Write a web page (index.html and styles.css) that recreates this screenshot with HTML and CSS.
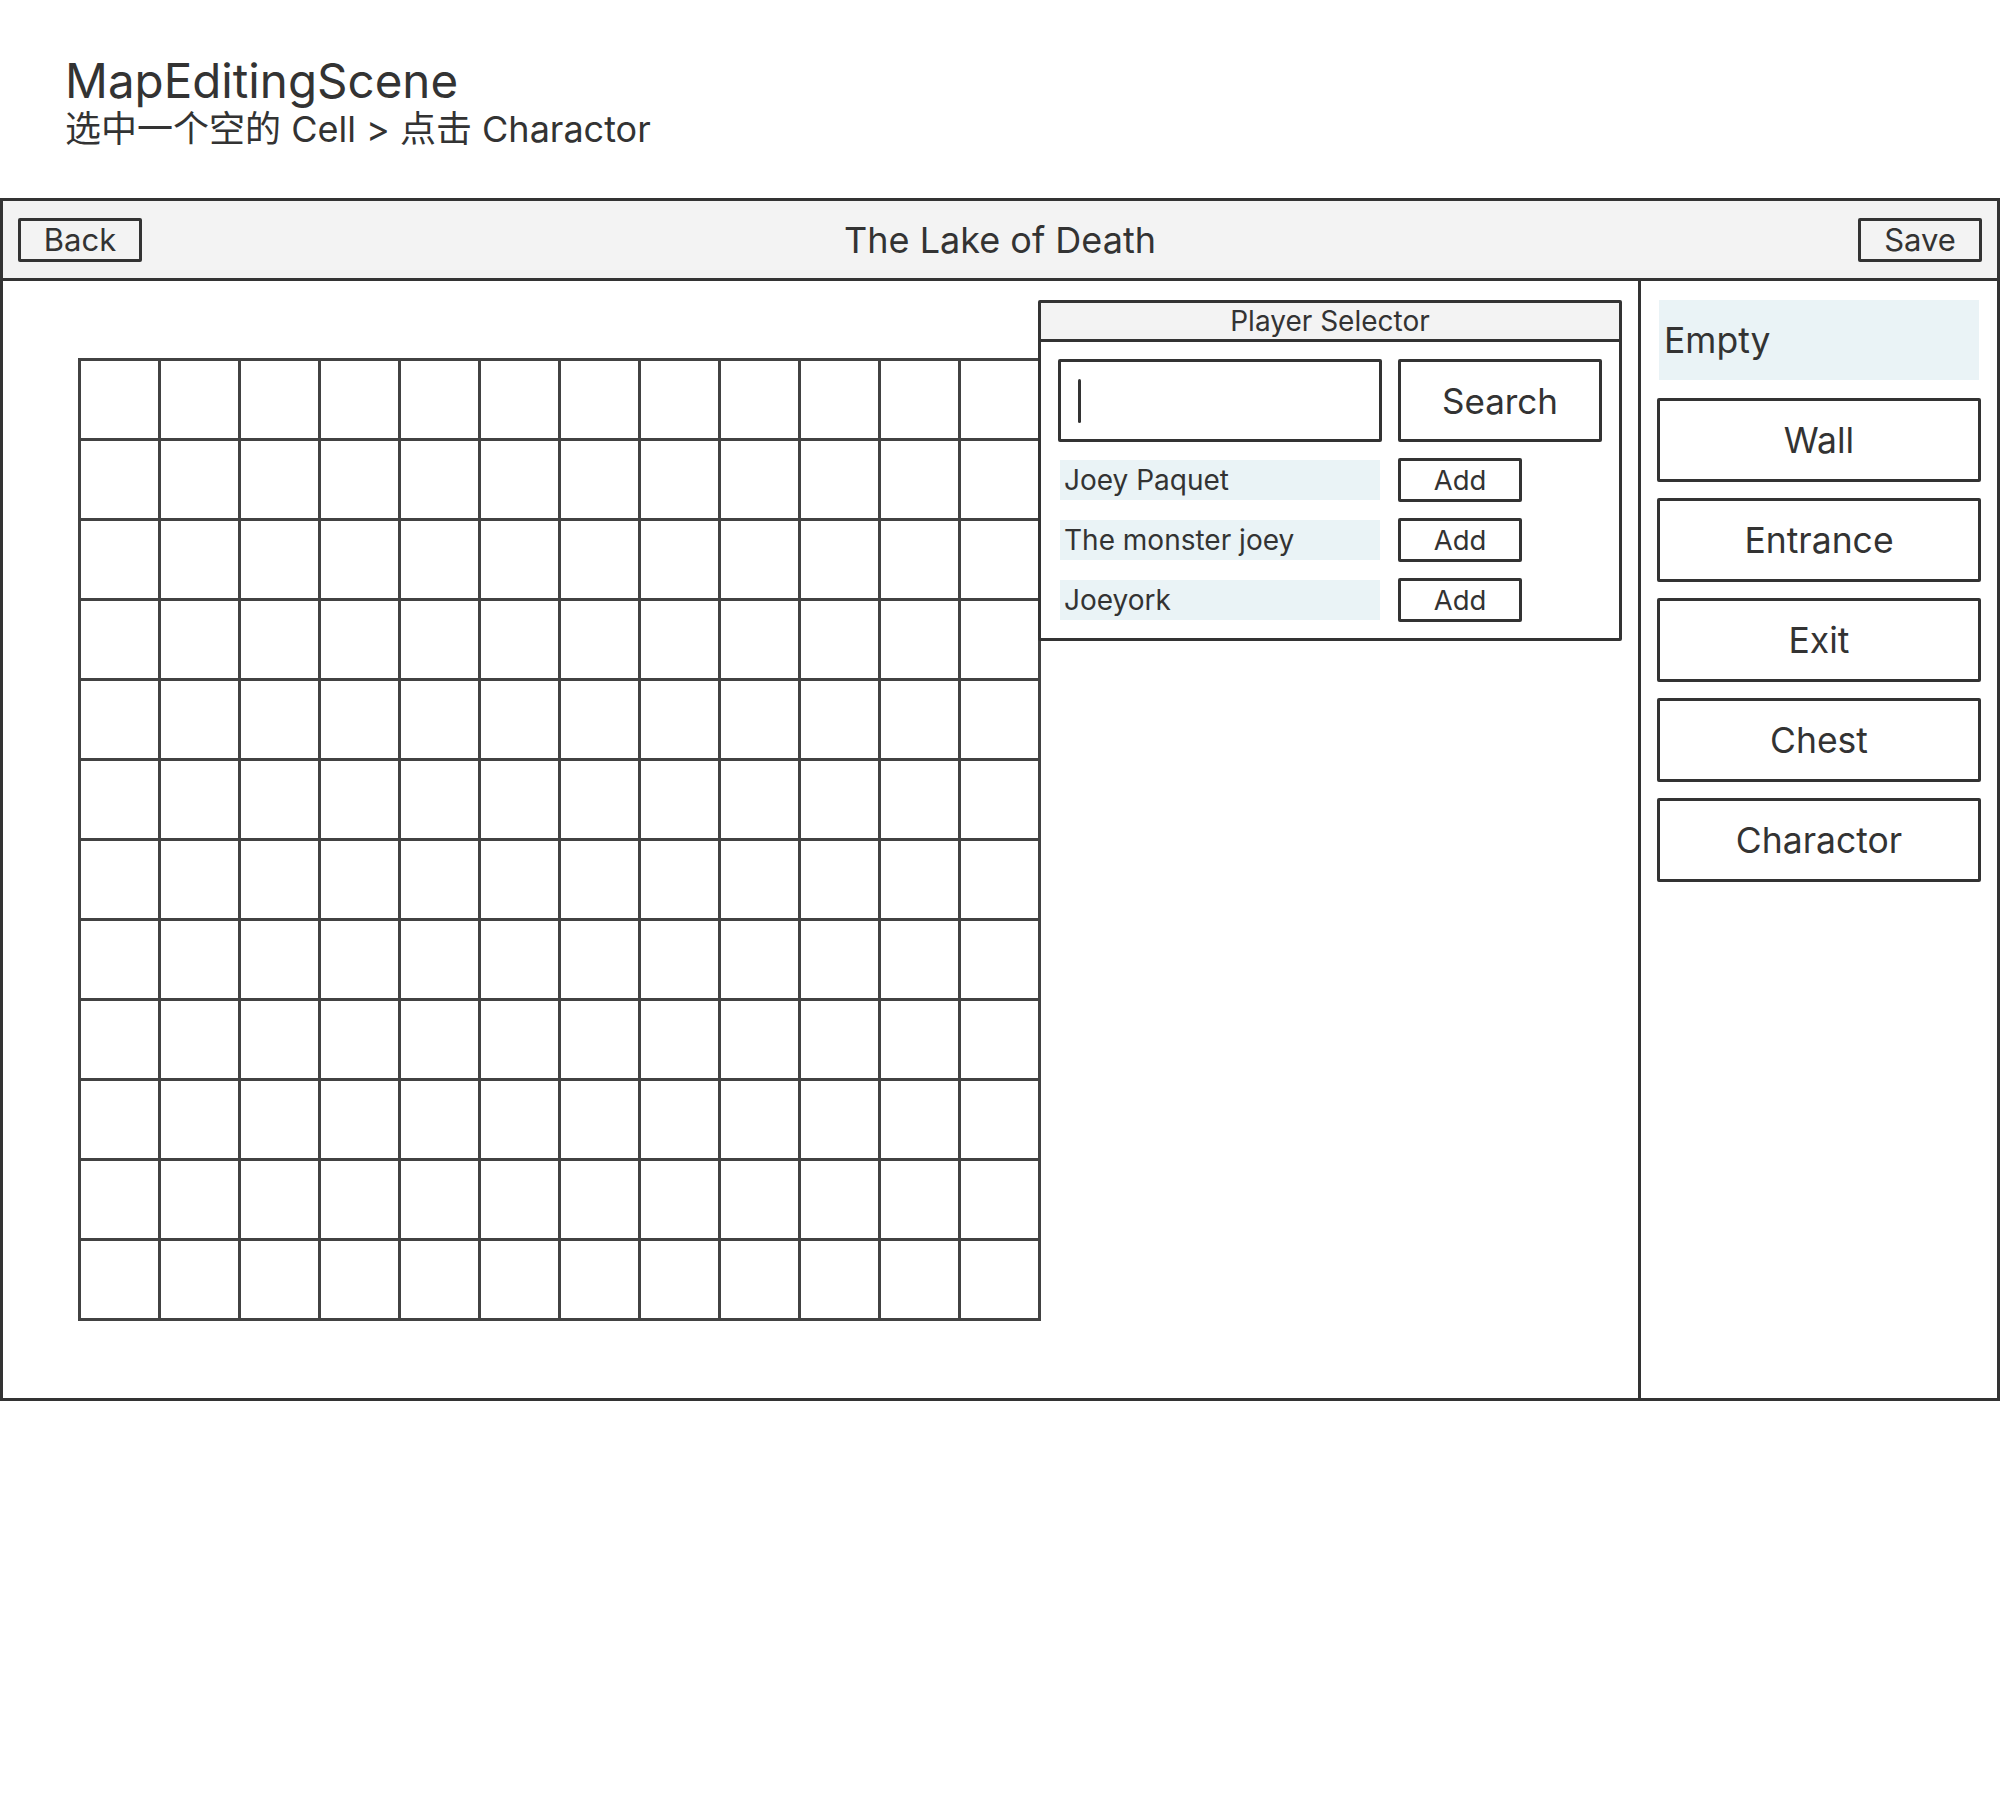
FILE: index.html
```html
<!DOCTYPE html>
<html lang="zh">
<head>
<meta charset="utf-8">
<title>MapEditingScene</title>
<link rel="stylesheet" href="styles.css">
</head>
<body>
<header class="scene-head">
  <h1 class="scene-title">MapEditingScene</h1>
  <p class="scene-sub">选中一个空的 Cell &gt; 点击 Charactor</p>
</header>

<div class="window">
  <div class="toolbar">
    <div class="tb-btn">Back</div>
    <div class="tb-title">The Lake of Death</div>
    <div class="tb-btn">Save</div>
  </div>

  <div class="workspace">
    <div class="map-area">
      <div class="map-grid">
        <div class="cell"></div><div class="cell"></div><div class="cell"></div><div class="cell"></div><div class="cell"></div><div class="cell"></div><div class="cell"></div><div class="cell"></div><div class="cell"></div><div class="cell"></div><div class="cell"></div><div class="cell"></div>
        <div class="cell"></div><div class="cell"></div><div class="cell"></div><div class="cell"></div><div class="cell"></div><div class="cell"></div><div class="cell"></div><div class="cell"></div><div class="cell"></div><div class="cell"></div><div class="cell"></div><div class="cell"></div>
        <div class="cell"></div><div class="cell"></div><div class="cell"></div><div class="cell"></div><div class="cell"></div><div class="cell"></div><div class="cell"></div><div class="cell"></div><div class="cell"></div><div class="cell"></div><div class="cell"></div><div class="cell"></div>
        <div class="cell"></div><div class="cell"></div><div class="cell"></div><div class="cell"></div><div class="cell"></div><div class="cell"></div><div class="cell"></div><div class="cell"></div><div class="cell"></div><div class="cell"></div><div class="cell"></div><div class="cell"></div>
        <div class="cell"></div><div class="cell"></div><div class="cell"></div><div class="cell"></div><div class="cell"></div><div class="cell"></div><div class="cell"></div><div class="cell"></div><div class="cell"></div><div class="cell"></div><div class="cell"></div><div class="cell"></div>
        <div class="cell"></div><div class="cell"></div><div class="cell"></div><div class="cell"></div><div class="cell"></div><div class="cell"></div><div class="cell"></div><div class="cell"></div><div class="cell"></div><div class="cell"></div><div class="cell"></div><div class="cell"></div>
        <div class="cell"></div><div class="cell"></div><div class="cell"></div><div class="cell"></div><div class="cell"></div><div class="cell"></div><div class="cell"></div><div class="cell"></div><div class="cell"></div><div class="cell"></div><div class="cell"></div><div class="cell"></div>
        <div class="cell"></div><div class="cell"></div><div class="cell"></div><div class="cell"></div><div class="cell"></div><div class="cell"></div><div class="cell"></div><div class="cell"></div><div class="cell"></div><div class="cell"></div><div class="cell"></div><div class="cell"></div>
        <div class="cell"></div><div class="cell"></div><div class="cell"></div><div class="cell"></div><div class="cell"></div><div class="cell"></div><div class="cell"></div><div class="cell"></div><div class="cell"></div><div class="cell"></div><div class="cell"></div><div class="cell"></div>
        <div class="cell"></div><div class="cell"></div><div class="cell"></div><div class="cell"></div><div class="cell"></div><div class="cell"></div><div class="cell"></div><div class="cell"></div><div class="cell"></div><div class="cell"></div><div class="cell"></div><div class="cell"></div>
        <div class="cell"></div><div class="cell"></div><div class="cell"></div><div class="cell"></div><div class="cell"></div><div class="cell"></div><div class="cell"></div><div class="cell"></div><div class="cell"></div><div class="cell"></div><div class="cell"></div><div class="cell"></div>
        <div class="cell"></div><div class="cell"></div><div class="cell"></div><div class="cell"></div><div class="cell"></div><div class="cell"></div><div class="cell"></div><div class="cell"></div><div class="cell"></div><div class="cell"></div><div class="cell"></div><div class="cell"></div>
      </div>

      <div class="player-selector">
        <div class="ps-head">Player Selector</div>
        <div class="ps-body">
          <div class="ps-input"><span class="caret"></span></div>
          <div class="btn ps-search">Search</div>

          <div class="ps-name">Joey Paquet</div>
          <div class="btn ps-add">Add</div>

          <div class="ps-name">The monster joey</div>
          <div class="btn ps-add">Add</div>

          <div class="ps-name">Joeyork</div>
          <div class="btn ps-add">Add</div>
        </div>
      </div>
    </div>

    <aside class="sidebar">
      <div class="side-empty">Empty</div>
      <div class="btn side-btn">Wall</div>
      <div class="btn side-btn">Entrance</div>
      <div class="btn side-btn">Exit</div>
      <div class="btn side-btn">Chest</div>
      <div class="btn side-btn">Charactor</div>
    </aside>
  </div>
</div>
</body>
</html>
```

FILE: styles.css
```css
* {
  box-sizing: border-box;
}

html, body {
  margin: 0;
  padding: 0;
  background: #ffffff;
}

body {
  width: 2000px;
  min-height: 1800px;
  color: #333333;
  font-family: Inter, "Noto Sans CJK SC", sans-serif;
}

/* ---------- scene header ---------- */
.scene-head {
  padding: 53px 0 0 65px;
}

.scene-title {
  margin: 0;
  font-size: 47.5px;
  font-weight: 400;
  line-height: 56px;
  letter-spacing: 0;
}

.scene-sub {
  margin: 0;
  font-size: 36px;
  line-height: 41px;
}

/* ---------- window ---------- */
.window {
  margin-top: 48px;
  width: 2000px;
  height: 1203px;
  border: 3px solid #333333;
  display: flex;
  flex-direction: column;
}

.toolbar {
  height: 80px;
  flex: none;
  background: #f3f3f3;
  border-bottom: 3px solid #333333;
  display: flex;
  align-items: center;
  justify-content: space-between;
  padding: 0 15px;
}

.tb-btn {
  width: 124px;
  height: 44px;
  border: 3px solid #333333;
  border-radius: 2px;
  display: flex;
  align-items: center;
  justify-content: center;
  font-size: 31px;
}

.tb-title {
  font-size: 36px;
}

.workspace {
  flex: 1;
  display: flex;
  min-height: 0;
}

/* ---------- map ---------- */
.map-area {
  flex: 1;
  position: relative;
  padding: 77px 0 0 75px;
}

.map-grid {
  width: 963px;
  display: grid;
  grid-template-columns: repeat(12, 80px);
  grid-auto-rows: 80px;
  border-top: 3px solid #424242;
  border-left: 3px solid #424242;
}

.cell {
  border-right: 3px solid #424242;
  border-bottom: 3px solid #424242;
}

/* ---------- player selector popup ---------- */
.player-selector {
  position: absolute;
  left: 1035px;
  top: 19px;
  width: 584px;
  height: 341px;
  background: #ffffff;
  border: 3px solid #333333;
  border-radius: 2px;
  display: flex;
  flex-direction: column;
}

.ps-head {
  height: 39px;
  flex: none;
  background: #f3f3f3;
  border-bottom: 3px solid #333333;
  display: flex;
  align-items: center;
  justify-content: center;
  font-size: 28px;
}

.ps-body {
  padding: 17px 17px 15px 17px;
  display: grid;
  grid-template-columns: 324px 204px;
  grid-template-rows: 83px 44px 44px 44px;
  column-gap: 16px;
  row-gap: 16px;
  align-items: center;
}

.btn {
  border: 3px solid #333333;
  border-radius: 2px;
  display: flex;
  align-items: center;
  justify-content: center;
  background: #ffffff;
}

.ps-input {
  height: 83px;
  border: 3px solid #333333;
  border-radius: 2px;
  display: flex;
  align-items: center;
  padding-left: 17px;
}

.caret {
  width: 3px;
  height: 44px;
  background: #333333;
  border-radius: 2px;
}

.ps-search {
  height: 83px;
  font-size: 35px;
}

.ps-name {
  height: 40px;
  margin: 0 2px;
  background: #eaf3f6;
  display: flex;
  align-items: center;
  padding-left: 4px;
  font-size: 28px;
}

.ps-add {
  width: 124px;
  height: 44px;
  font-size: 27.5px;
}

/* ---------- sidebar ---------- */
.sidebar {
  width: 359px;
  flex: none;
  border-left: 3px solid #333333;
  padding-top: 19px;
  display: flex;
  flex-direction: column;
  align-items: center;
}

.side-empty {
  width: 320px;
  height: 80px;
  margin-bottom: 18px;
  background: #eaf3f6;
  display: flex;
  align-items: center;
  padding-left: 5px;
  font-size: 35.5px;
}

.side-btn {
  width: 324px;
  height: 84px;
  margin-bottom: 16px;
  font-size: 35.5px;
}
```
